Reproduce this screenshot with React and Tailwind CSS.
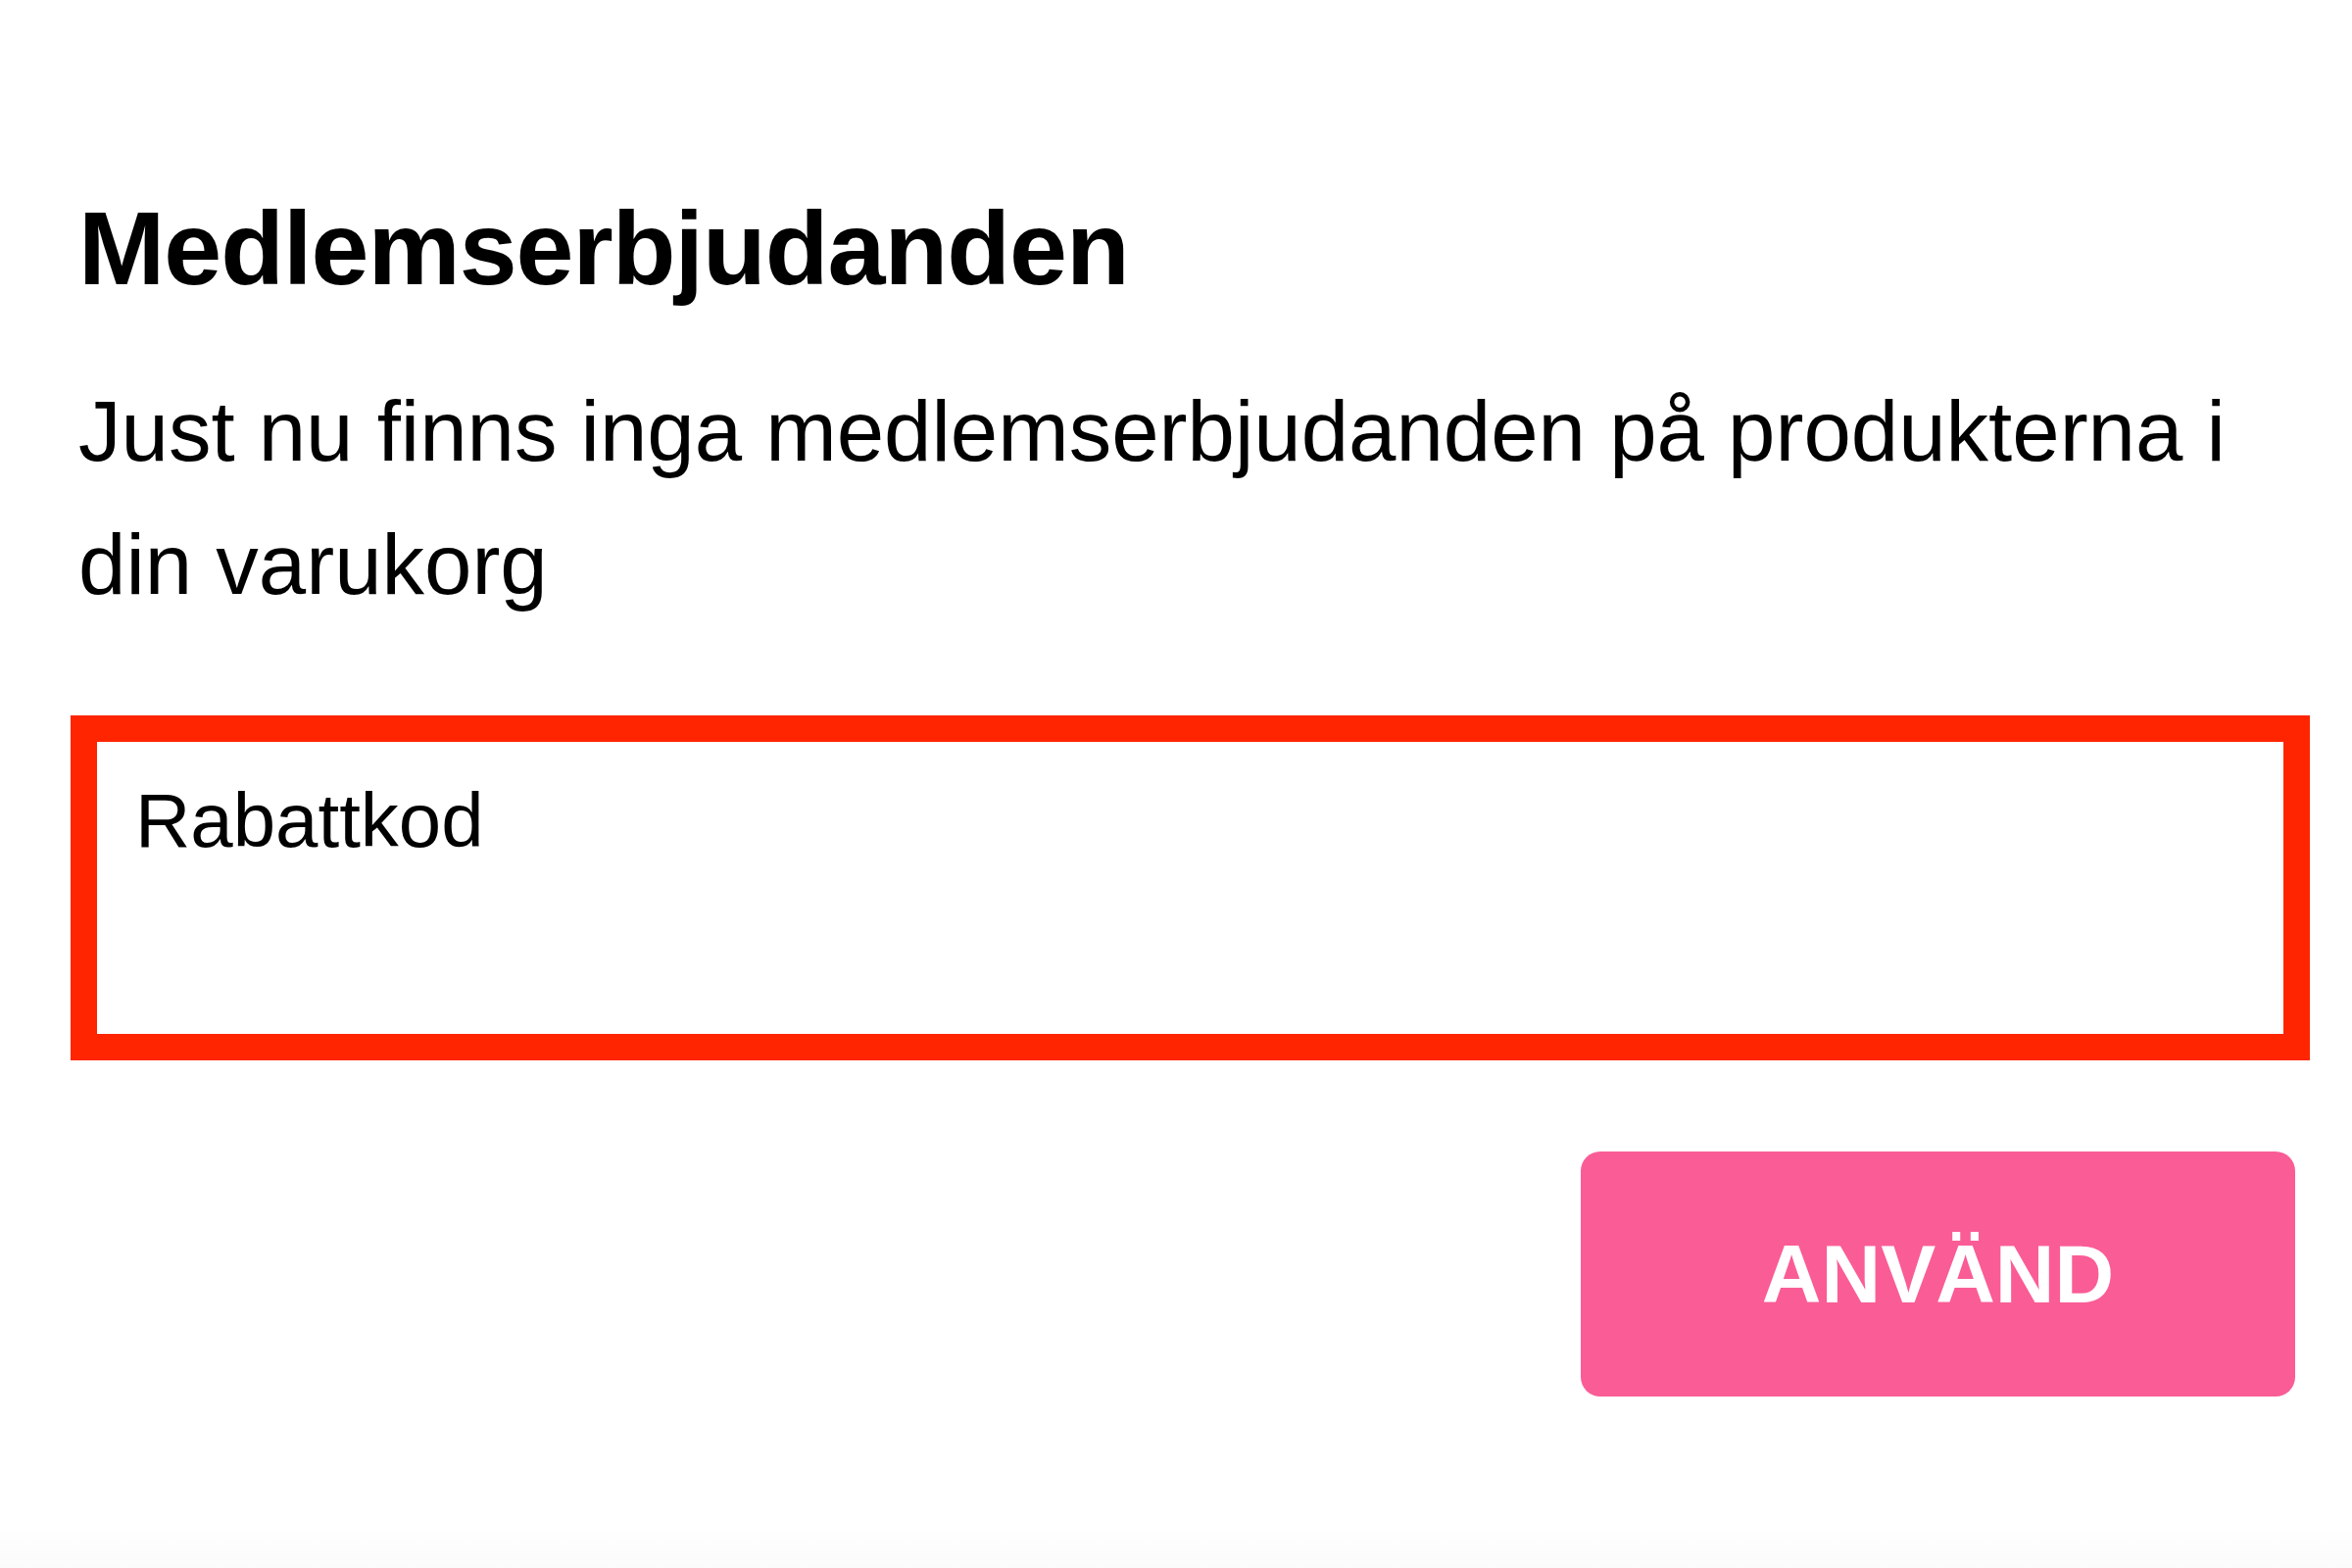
import { useState } from 'react'

export default function App() {
  const [code, setCode] = useState('')

  return (
    <div className="flex min-h-[1600px] w-full flex-col bg-white font-['Liberation_Sans',Arial,sans-serif] text-black">
      <div className="flex flex-1 flex-col pl-[72px] pr-[43px] pt-[200px]">
        <h1 className="ml-[8px] text-[106px] font-bold leading-none tracking-[-1px]">Medlemserbjudanden</h1>

        <p className="ml-[8px] mt-[66px] pr-[60px] text-[87px] leading-[136px]">
          Just nu finns inga medlemserbjudanden på produkterna i din varukorg
        </p>

        <label className="mt-[86px] flex h-[352px] flex-col border-[27px] border-[#ff2500] bg-white px-[39px] pt-[41px]">
          <span className="text-[78px] leading-none">Rabattkod</span>
          <input
            value={code}
            onChange={(e) => setCode(e.target.value)}
            className="mt-4 w-full bg-transparent text-[78px] outline-none"
          />
        </label>

        <div className="mt-[93px] flex justify-end pr-[15px]">
          <button
            type="button"
            className="flex h-[250px] w-[729px] items-center justify-center rounded-[20px] bg-[#fa5c96] text-[84px] font-bold uppercase leading-none text-white"
          >
            Använd
          </button>
        </div>
      </div>
      <div className="h-[44px] bg-gradient-to-b from-white to-[#fbfbfb]" />
    </div>
  )
}
